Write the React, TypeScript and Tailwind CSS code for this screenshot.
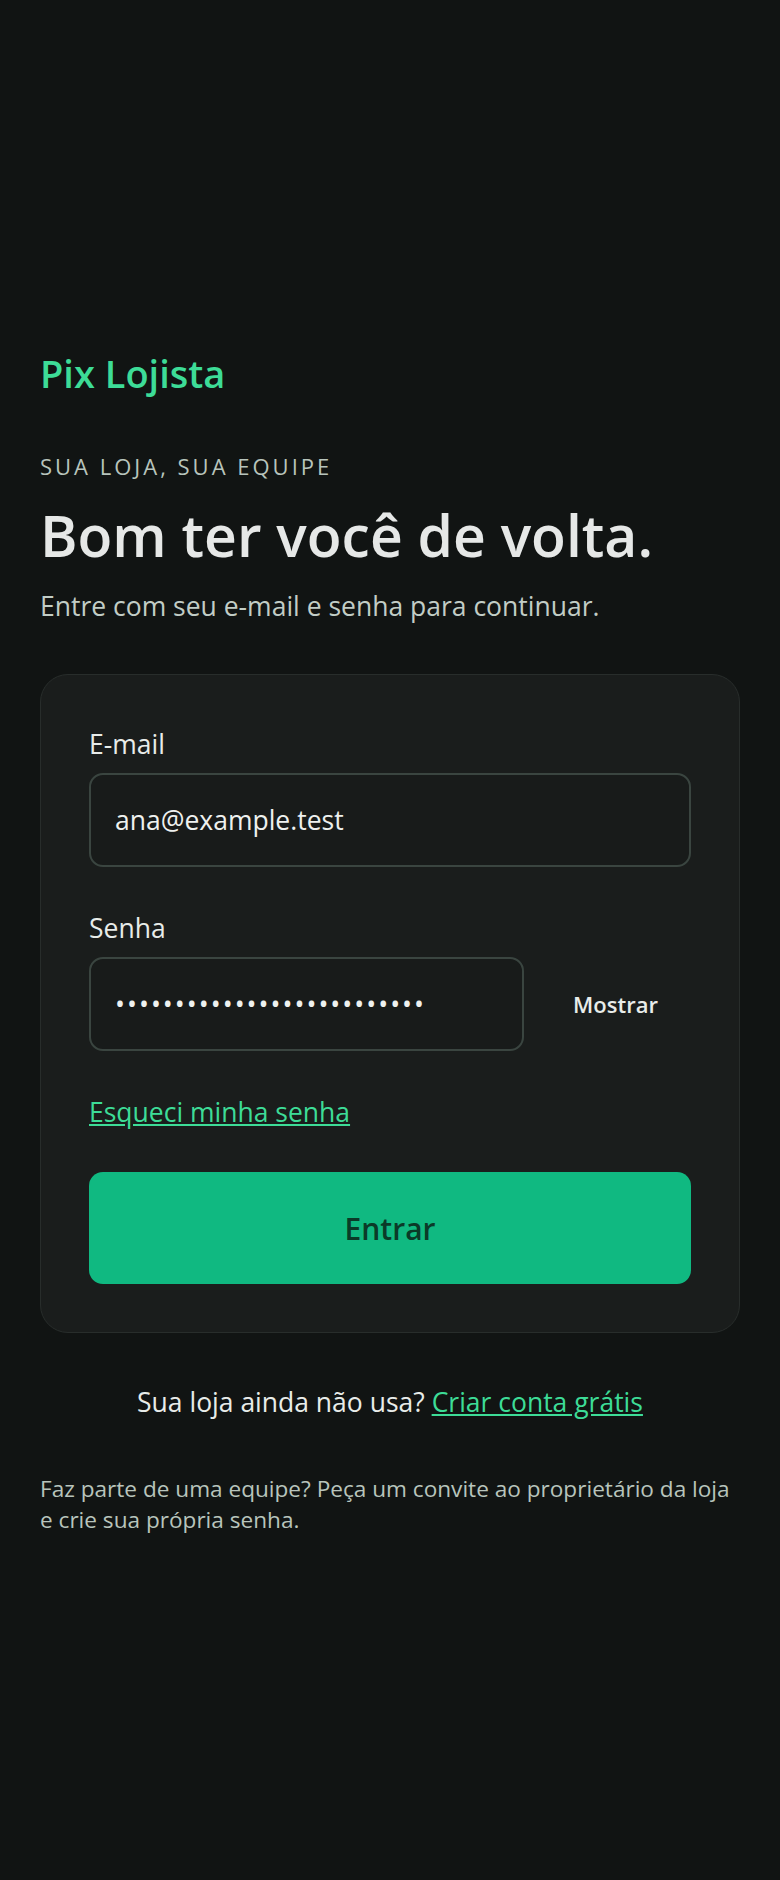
import { useState } from "react";

const FONT = "font-['Segoe_UI','Open_Sans',sans-serif]";

function Field({ label, children }: { label: string; children: React.ReactNode }) {
  return (
    <div>
      <label className="block text-[26.5px] leading-[36px] text-[#e8ece9] mb-[11px]">{label}</label>
      {children}
    </div>
  );
}

export default function App() {
  const [email, setEmail] = useState("ana@example.test");
  const [senha, setSenha] = useState("senhasupersecreta123456789");
  const [show, setShow] = useState(false);

  return (
    <div className={`min-h-screen bg-[#111413] flex flex-col justify-center px-10 ${FONT}`}>
      <div className="w-full pt-1">
        <p className="text-[38px] leading-[48px] font-semibold text-[#3ddc97]">Pix Lojista</p>
        <p className="mt-[54px] text-[22px] leading-[30px] uppercase tracking-[3px] text-[#b8c4bc]">
          Sua loja, sua equipe
        </p>
        <h1 className="mt-[22px] text-[57px] leading-[64px] font-semibold text-[#e6e8e7]">
          Bom ter você de volta.
        </h1>
        <p className="mt-[21px] text-[26.5px] leading-[36px] text-[#c2cdc6]">
          Entre com seu e-mail e senha para continuar.
        </p>

        <div className="mt-[50px] rounded-[28px] border border-[#282d2b] bg-[#1a1d1c] px-12 pt-[51px] pb-12">
          <Field label="E-mail">
            <input
              type="email"
              value={email}
              onChange={(e) => setEmail(e.target.value)}
              className="w-full h-[94px] rounded-[14px] border-2 border-[#3a4540] bg-[#181b1a] px-[24px] text-[26.5px] text-[#eef1ef] outline-none"
            />
          </Field>

          <div className="mt-[43px]">
            <Field label="Senha">
              <div className="flex items-center gap-4">
                <input
                  type={show ? "text" : "password"}
                  value={senha}
                  onChange={(e) => setSenha(e.target.value)}
                  className="w-[435px] h-[94px] rounded-[14px] border-2 border-[#3a4540] bg-[#181b1a] px-[24px] text-[26.5px] tracking-[2px] text-[#eef1ef] outline-none"
                />
                <button
                  type="button"
                  onClick={() => setShow(!show)}
                  className="flex-1 text-center text-[22px] font-semibold text-[#e8ece9]"
                >
                  {show ? "Ocultar" : "Mostrar"}
                </button>
              </div>
            </Field>
          </div>

          <a href="#" className="mt-[43px] block w-fit text-[26.5px] leading-[36px] text-[#3ddc97] underline underline-offset-2">
            Esqueci minha senha
          </a>

          <button
            type="button"
            className="mt-[42px] w-full h-[112px] rounded-[14px] bg-[#10b981] text-[30px] font-semibold text-[#0b3a28]"
          >
            Entrar
          </button>
        </div>

        <p className="mt-[51px] text-center text-[26.5px] leading-[36px] text-[#e8ece9]">
          Sua loja ainda não usa?{" "}
          <a href="#" className="text-[#3ddc97] font-medium underline underline-offset-2">
            Criar conta grátis
          </a>
        </p>

        <p className="mt-[53px] text-[22.6px] leading-[31px] text-[#b8c4bc]">
          Faz parte de uma equipe? Peça um convite ao proprietário da loja e crie sua própria senha.
        </p>
      </div>
    </div>
  );
}
